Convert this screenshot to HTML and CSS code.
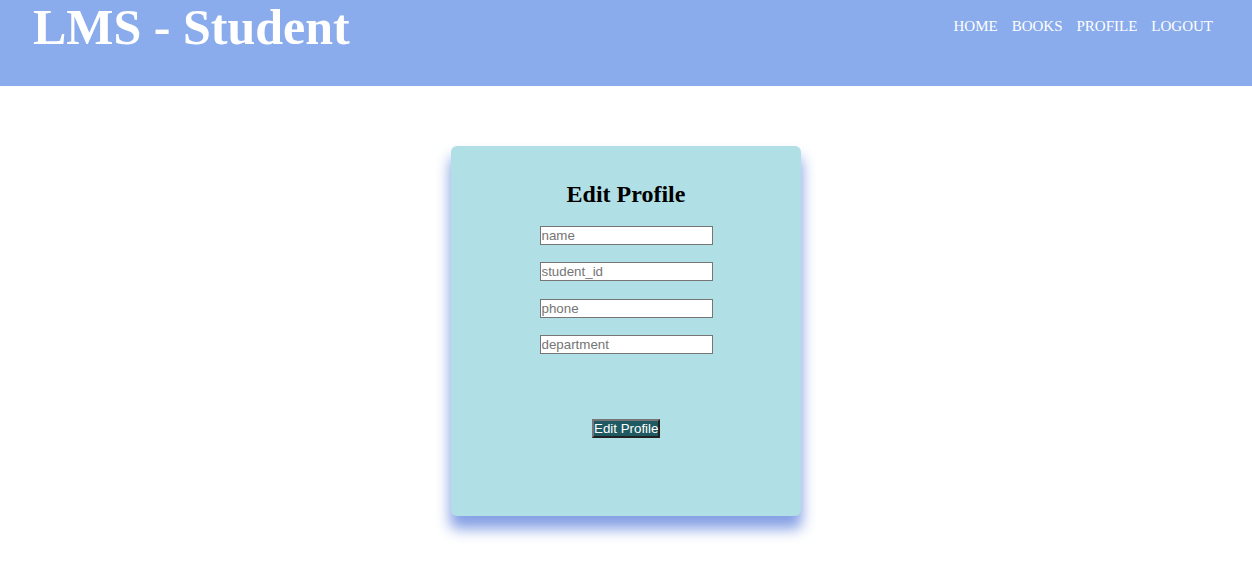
FILE: index.html
```html
<!DOCTYPE html>
<html>
<head>
<meta charset="utf-8">
<title>LMS - Student</title>
<link rel="stylesheet" href="styles.css">
</head>
<body>
<header class="topbar">
  <h1 class="brand">LMS - Student</h1>
  <nav class="nav">
    <a href="#">HOME</a>
    <a href="#">BOOKS</a>
    <a href="#">PROFILE</a>
    <a href="#">LOGOUT</a>
  </nav>
</header>
<main class="main">
  <form class="card">
    <h2 class="card-title">Edit Profile</h2>
    <input class="field" type="text" placeholder="name">
    <input class="field" type="text" placeholder="student_id">
    <input class="field" type="text" placeholder="phone">
    <input class="field" type="text" placeholder="department">
    <button class="btn" type="button">Edit Profile</button>
  </form>
</main>
</body>
</html>
```

FILE: styles.css
```css
html, body {
  margin: 0;
  padding: 0;
  background: #ffffff;
  font-family: "Liberation Serif", "Times New Roman", serif;
}

.topbar {
  height: 86px;
  background: #8aacec;
  display: flex;
  justify-content: space-between;
  align-items: flex-start;
  padding: 0 39px 0 33px;
  box-sizing: border-box;
}

.brand {
  margin: 0;
  font-size: 50px;
  line-height: 54px;
  font-weight: bold;
  color: #ffffff;
}

.nav {
  display: flex;
  gap: 14px;
  padding-top: 17px;
}

.nav a {
  color: #ffffff;
  text-decoration: none;
  font-size: 15px;
  line-height: 18px;
}

.main {
  display: flex;
  justify-content: center;
  padding: 60px 0 40px 0;
}

.card {
  width: 350px;
  height: 370px;
  box-sizing: border-box;
  background: #b0dfe5;
  border-radius: 6px;
  box-shadow: 0 12px 14px 1px rgba(120, 150, 225, 0.9);
  display: flex;
  flex-direction: column;
  align-items: center;
  padding-top: 33px;
}

.card-title {
  margin: 0 0 17px 0;
  font-size: 24px;
  line-height: 30px;
  font-weight: bold;
  color: #000000;
}

.field {
  width: 173px;
  height: 19px;
  box-sizing: border-box;
  margin: 0 0 17.3px 0;
  padding: 0 1px;
  border: 1px solid #767676;
  border-radius: 0;
  background: #ffffff;
  font-family: "Liberation Sans", Arial, sans-serif;
  font-size: 13.333px;
  color: #000;
}

.field::placeholder {
  color: #757575;
}

.btn {
  margin-top: 48px;
  width: 68px;
  height: 19px;
  box-sizing: border-box;
  padding: 0;
  background: #1f5a63;
  color: #ffffff;
  border: 2px outset #767676;
  font-family: "Liberation Sans", Arial, sans-serif;
  font-size: 13.333px;
  line-height: 15px;
  white-space: nowrap;
}
```
